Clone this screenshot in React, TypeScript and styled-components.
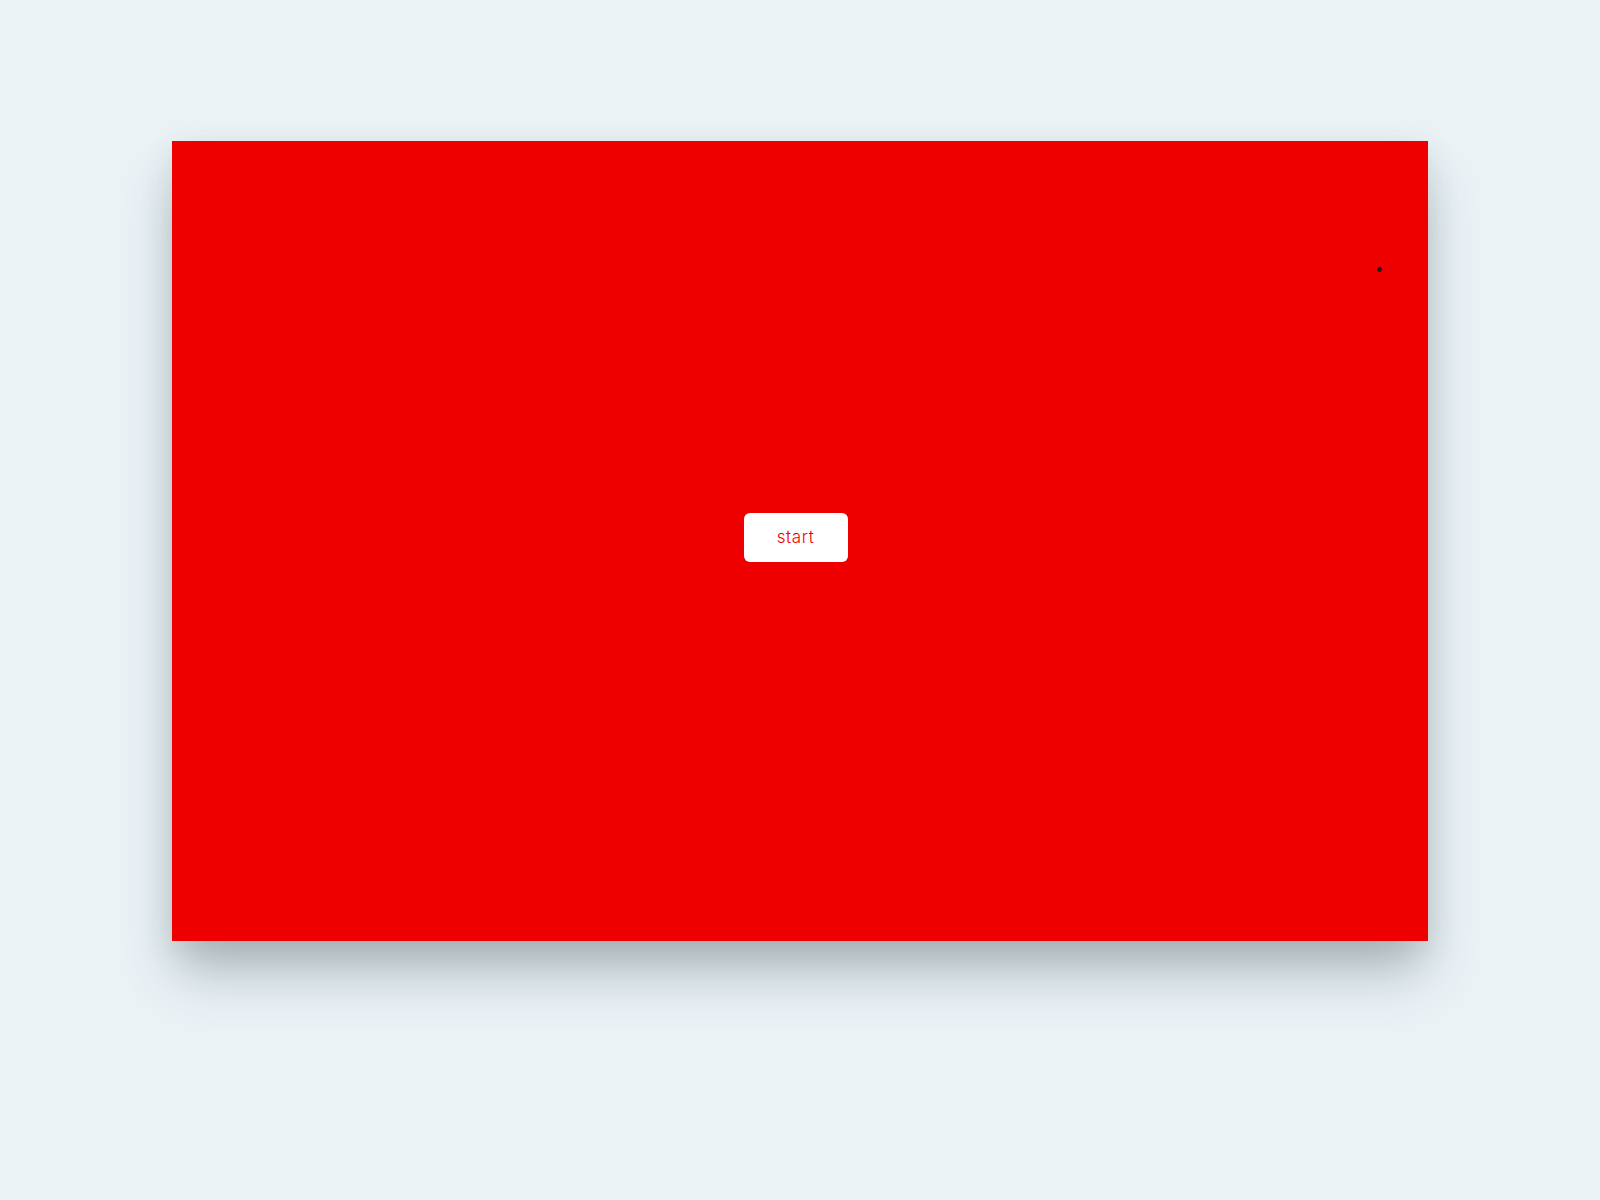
import React from "react";
import styled, {createGlobalStyle} from "styled-components";

const GlobalStyle = createGlobalStyle`
    html, body {
        margin: 0;
        padding: 0;
        background: #eaf2f6;
        font-family: 'Inter', 'Liberation Sans', sans-serif;
    }
`;

const Page = styled.div`
    display: flex;
    justify-content: center;
    padding-top: 141px;
    min-height: 1200px;
    box-sizing: border-box;
`;

const Stage = styled.div`
    position: relative;
    width: 1256px;
    height: 800px;
    background: #ee0000;
    display: flex;
    justify-content: center;
    align-items: center;
    box-shadow: 0 36px 50px -6px rgba(60, 70, 75, 0.32), 0 10px 30px rgba(60, 70, 75, 0.12);
`;

const Dot = styled.div`
    position: absolute;
    left: 1205px;
    top: 126px;
    width: 5px;
    height: 5px;
    border-radius: 50%;
    background: #1e1e1e;
`;

const StartButton = styled.button`
    width: 104px;
    height: 49px;
    margin: -8px 0 0 -9px;
    border: none;
    border-radius: 6px;
    background: #ffffff;
    color: #ee0000;
    font-family: 'Inter', 'Liberation Sans', sans-serif;
    font-size: 17px;
    font-weight: 300;
    letter-spacing: 0.6px;
    cursor: pointer;
`;

export default function App() {
    return (
        <>
            <GlobalStyle/>
            <Page>
                <Stage>
                    <Dot/>
                    <StartButton>start</StartButton>
                </Stage>
            </Page>
        </>
    );
}
